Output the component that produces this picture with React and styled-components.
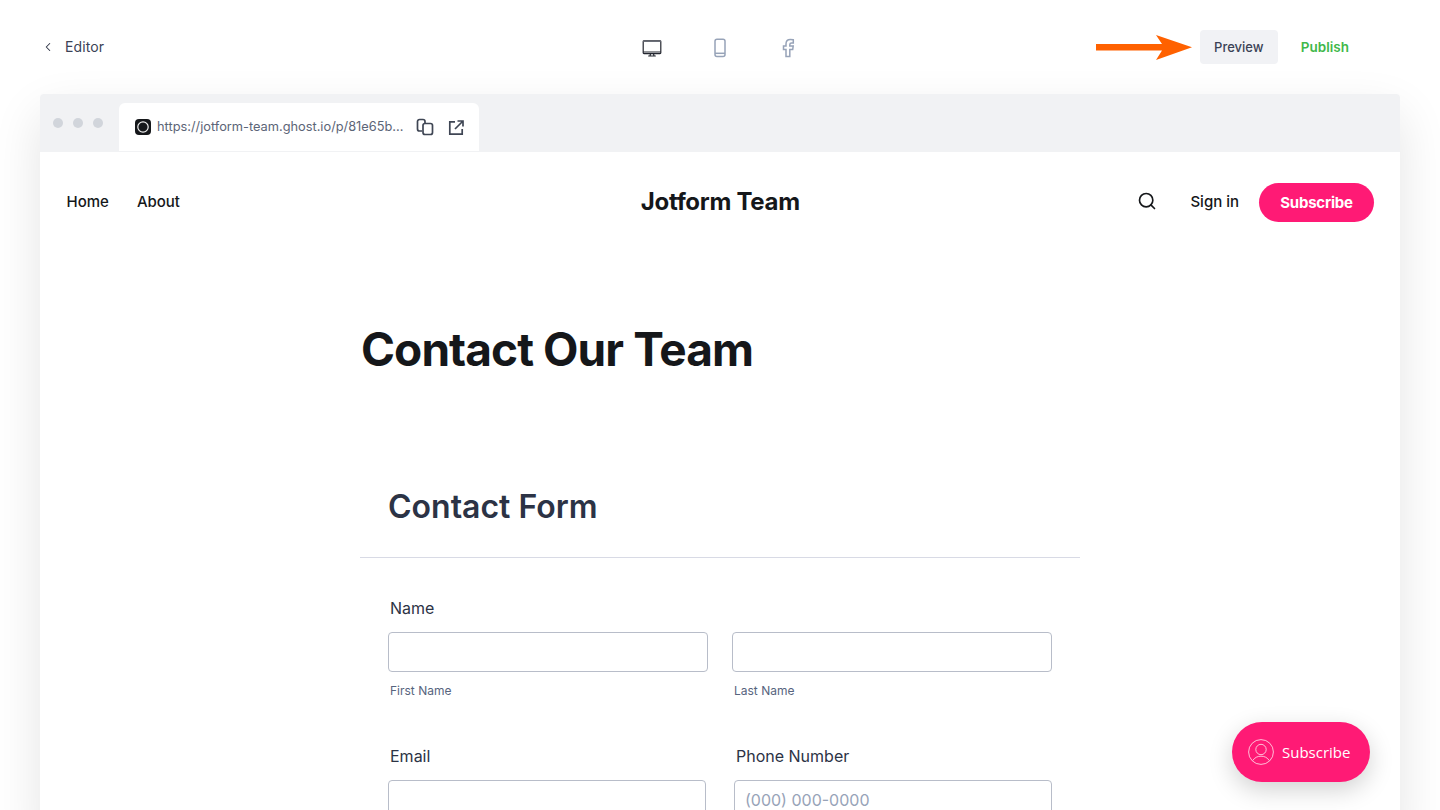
import React from 'react';
import styled, { createGlobalStyle } from 'styled-components';
import { ChevronLeft, Search } from 'lucide-react';

const GlobalStyle = createGlobalStyle`
    html, body {
        margin: 0;
        height: 810px;
        overflow: hidden;
        background: #fff;
        font-family: Inter, "Liberation Sans", sans-serif;
    }
    * {
        box-sizing: border-box;
    }
`;

const Page = styled.div`
    width: 1440px;
    height: 810px;
    overflow: hidden;
    padding: 0 40px;
`;

const TopBar = styled.header`
    height: 94px;
    display: grid;
    grid-template-columns: 1fr auto 1fr;
    align-items: center;
`;

const BackLink = styled.div`
    display: flex;
    align-items: center;
    gap: 10px;
    color: #3b4256;
    font-size: 14px;
    letter-spacing: 0.1px;
    line-height: 16px;
    svg {
        color: #2c3345;
        margin-left: 1px;
    }
`;

const Devices = styled.div`
    display: flex;
    gap: 44px;
    margin-top: 1px;
`;

const DeviceIcon = styled.svg`
    width: 24px;
    height: 24px;
    display: block;
    fill: none;
    stroke: ${(props) => (props.$active ? '#23262f' : '#97a3b8')};
    stroke-width: ${(props) => (props.$active ? 1.2 : 1.5)};
`;

const Actions = styled.div`
    display: flex;
    align-items: center;
    justify-content: flex-end;
    padding-right: 51px;
`;

const Arrow = styled.svg`
    width: 100px;
    height: 26px;
    margin-right: 4px;
    display: block;
`;

const PreviewButton = styled.div`
    width: 78px;
    height: 34px;
    border-radius: 4px;
    background: #f1f2f5;
    color: #3b4256;
    font-size: 13px;
    font-weight: 500;
    display: flex;
    align-items: center;
    justify-content: center;
`;

const PublishButton = styled.div`
    color: #3fb84a;
    font-size: 13.5px;
    font-weight: 600;
    margin-left: 23px;
`;

const BrowserFrame = styled.section`
    position: relative;
    width: 1360px;
    height: 740px;
    border-radius: 4px 4px 0 0;
    background: #fff;
    box-shadow: 0 20px 50px rgba(0, 0, 0, 0.11);
`;

const ChromeBar = styled.div`
    height: 58px;
    background: #f1f2f4;
    border-radius: 4px 4px 0 0;
    display: flex;
    align-items: flex-end;
    padding-left: 13px;
`;

const Dots = styled.div`
    display: flex;
    gap: 10px;
    align-self: flex-start;
    margin-top: 24px;
    margin-right: 16px;
`;

const Dot = styled.span`
    width: 10px;
    height: 10px;
    border-radius: 50%;
    background: #d1d5db;
`;

const Tab = styled.div`
    width: 360px;
    height: 49px;
    background: #fff;
    border-radius: 6px 6px 0 0;
    border-bottom: 1px solid #f1f2f4;
    display: flex;
    align-items: center;
    padding-left: 16px;
`;

const Favicon = styled.svg`
    width: 16px;
    height: 16px;
    margin-right: 6px;
    flex: none;
`;

const Url = styled.span`
    color: #5c6577;
    font-size: 12.8px;
    width: 248px;
    margin-bottom: 2px;
    white-space: nowrap;
    overflow: hidden;
`;

const TabIcon = styled.svg`
    width: 18px;
    height: 18px;
    margin-left: ${(props) => props.$gap}px;
    flex: none;
    fill: none;
    stroke: #3f4654;
    stroke-width: 1.7;
`;

const SiteNav = styled.nav`
    height: 100px;
    padding: 0 26px 2px 26.5px;
    display: grid;
    grid-template-columns: 1fr auto 1fr;
    align-items: center;
    color: #15171a;
`;

const NavLinks = styled.div`
    display: flex;
    gap: 28px;
    font-size: 15px;
    font-weight: 500;
`;

const SiteTitle = styled.div`
    font-size: 24px;
    font-weight: 700;
    letter-spacing: -0.3px;
`;

const NavRight = styled.div`
    display: flex;
    align-items: center;
    justify-content: flex-end;
    font-size: 15px;
    font-weight: 500;
`;

const SignIn = styled.span`
    margin-left: 33px;
    margin-right: 20px;
`;

const SubscribePill = styled.div`
    width: 115px;
    height: 39px;
    margin-top: 2px;
    border-radius: 20px;
    background: #ff1a75;
    color: #fff;
    font-weight: 700;
    letter-spacing: -0.2px;
    display: flex;
    align-items: center;
    justify-content: center;
`;

const Article = styled.main`
    width: 720px;
    margin: 0 auto;
`;

const Heading = styled.h1`
    margin: 67px 0 0 1px;
    color: #15171a;
    font-size: 46px;
    line-height: 60px;
    font-weight: 700;
    letter-spacing: -0.92px;
`;

const FormHeader = styled.div`
    margin-top: 75px;
    padding: 33px 28px 30px;
    border-bottom: 1px solid #d8dae5;
`;

const FormTitle = styled.h2`
    margin: 0;
    color: #2c3345;
    font-size: 32px;
    line-height: 40px;
    font-weight: 600;
`;

const Fields = styled.div`
    padding: 40px 28px 0;
`;

const FieldRow = styled.div`
    display: grid;
    grid-template-columns: ${(props) => props.$columns};
    column-gap: ${(props) => props.$gap}px;
    margin-bottom: ${(props) => props.$bottom}px;
`;

const Label = styled.div`
    color: #2c3345;
    font-size: 16px;
    line-height: 20px;
    margin: 0 0 14px 2px;
`;

const Input = styled.div`
    height: 40px;
    border: 1px solid #b8bdc9;
    border-radius: 4px;
    background: #fff;
    padding-left: 10px;
    color: #97a3b8;
    font-size: 16px;
    line-height: 38px;
`;

const SubLabel = styled.div`
    margin: 11px 0 0 2px;
    color: #57647e;
    font-size: 12px;
    line-height: 15px;
`;

const FloatingSubscribe = styled.div`
    position: absolute;
    left: 1192px;
    top: 628px;
    width: 138px;
    height: 60px;
    border-radius: 30px;
    background: #ff1a75;
    color: #fff;
    font-family: "Open Sans", sans-serif;
    font-size: 15px;
    box-shadow: 0 8px 24px rgba(0, 0, 0, 0.18);
    display: flex;
    align-items: center;
    padding-left: 16px;
    gap: 8px;
`;

const App = () => (
    <Page>
        <GlobalStyle />
        <TopBar>
            <BackLink>
                <ChevronLeft size={14} strokeWidth={1.8} />
                Editor
            </BackLink>
            <Devices>
                <DeviceIcon viewBox="0 0 24 24" $active>
                    <rect x="3.200" y="4.800" width="17.600" height="12.800" rx="0.8" />
                    <path d="M3.200 16h17.600M10.500 17.600l-.5 2.200M13.500 17.600l.5 2.200M8.200 20h7.600" />
                    <path d="M3.200 5.300h17.600" strokeWidth="1.400" stroke="#6b6f78" />
                </DeviceIcon>
                <DeviceIcon viewBox="0 0 24 24">
                    <rect x="7" y="3.300" width="10" height="17.200" rx="2" />
                    <path d="M7 17.300h10" />
                </DeviceIcon>
                <DeviceIcon viewBox="0 0 24 24">
                    <path d="M10 20.500v-7H7.500V10H10V8c0-3 1.700-4.500 4.300-4.500 1 0 2 .1 3 .3V7h-1.800c-1.200 0-1.700.6-1.700 1.700V10h3.400l-.5 3.500h-2.900v7z" />
                </DeviceIcon>
            </Devices>
            <Actions>
                <Arrow viewBox="0 0 100 26">
                    <path d="M0 10H66L60 1 96 13.300 60 26l6-9.500H0z" fill="#ff6100" />
                </Arrow>
                <PreviewButton>Preview</PreviewButton>
                <PublishButton>Publish</PublishButton>
            </Actions>
        </TopBar>
        <BrowserFrame>
            <ChromeBar>
                <Dots>
                    <Dot />
                    <Dot />
                    <Dot />
                </Dots>
                <Tab>
                    <Favicon viewBox="0 0 16 16">
                        <rect width="16" height="16" rx="4" fill="#15171a" />
                        <circle cx="8" cy="8" r="5.200" fill="#15171a" stroke="#efefef" strokeWidth="1.200" />
                    </Favicon>
                    <Url>https://jotform-team.ghost.io/p/81e65b...</Url>
                    <TabIcon viewBox="0 0 18 18" $gap={11}>
                        <path d="M6 13H3.500a2 2 0 0 1-2-2V3.500a2 2 0 0 1 2-2H7a2 2 0 0 1 2 2V5" />
                        <rect x="7" y="5.500" width="9.500" height="11" rx="2" />
                    </TabIcon>
                    <TabIcon viewBox="0 0 18 18" $gap={13}>
                        <path d="M8 3.800H2.800v12.400h12.400V11" />
                        <path d="M10.500 3H16v5.500M16 3 8 11" />
                    </TabIcon>
                </Tab>
            </ChromeBar>
            <SiteNav>
                <NavLinks>
                    <span>Home</span>
                    <span>About</span>
                </NavLinks>
                <SiteTitle>Jotform Team</SiteTitle>
                <NavRight>
                    <Search size={20} strokeWidth={2} />
                    <SignIn>Sign in</SignIn>
                    <SubscribePill>Subscribe</SubscribePill>
                </NavRight>
            </SiteNav>
            <Article>
                <Heading>Contact Our Team</Heading>
                <FormHeader>
                    <FormTitle>Contact Form</FormTitle>
                </FormHeader>
                <Fields>
                    <Label>Name</Label>
                    <FieldRow $columns="320px 320px" $gap={24} $bottom={48}>
                        <div>
                            <Input />
                            <SubLabel>First Name</SubLabel>
                        </div>
                        <div>
                            <Input />
                            <SubLabel>Last Name</SubLabel>
                        </div>
                    </FieldRow>
                    <FieldRow $columns="318px 318px" $gap={28} $bottom={0}>
                        <div>
                            <Label>Email</Label>
                            <Input />
                        </div>
                        <div>
                            <Label>Phone Number</Label>
                            <Input>(000) 000-0000</Input>
                        </div>
                    </FieldRow>
                </Fields>
            </Article>
            <FloatingSubscribe>
                <svg width="26" height="26" viewBox="0 0 26 26" fill="none" stroke="#fff" strokeWidth="0.8" opacity="0.9">
                    <circle cx="13" cy="13" r="12.400" />
                    <circle cx="13" cy="10.500" r="5.200" />
                    <path d="M4.800 21.500c1.800-3 4.800-4.300 8.200-4.300s6.400 1.300 8.200 4.300" />
                </svg>
                Subscribe
            </FloatingSubscribe>
        </BrowserFrame>
    </Page>
);

export default App;
